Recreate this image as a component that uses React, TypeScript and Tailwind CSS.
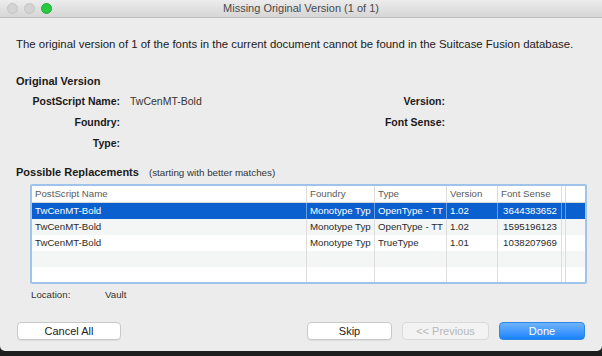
import React from "react";

const font = { fontFamily: "'Liberation Sans', Arial, sans-serif" };

type Row = { name: string; foundry: string; type: string; version: string; sense: string };

const rows: Row[] = [
  { name: "TwCenMT-Bold", foundry: "Monotype Typ", type: "OpenType - TT", version: "1.02", sense: "3644383652" },
  { name: "TwCenMT-Bold", foundry: "Monotype Typ", type: "OpenType - TT", version: "1.02", sense: "1595196123" },
  { name: "TwCenMT-Bold", foundry: "Monotype Typ", type: "TrueType", version: "1.01", sense: "1038207969" },
];

function Cells({ r, selected }: { r?: Row; selected?: boolean }) {
  const sep = selected ? "border-r border-[#6a9ee2]" : "border-r border-[#dcdcdc]";
  return (
    <>
      <div className={`w-[275px] pl-[3px] truncate ${sep}`}>{r?.name}</div>
      <div className={`w-[68px] pl-[3px] whitespace-nowrap overflow-hidden ${sep}`}>{r?.foundry}</div>
      <div className={`w-[72px] pl-[3px] whitespace-nowrap overflow-hidden ${sep}`}>{r?.type}</div>
      <div className={`w-[51px] pl-[3px] ${sep}`}>{r?.version}</div>
      <div className={`w-[64px] pr-[4px] text-right ${sep}`}>{r?.sense}</div>
      <div className={`w-[4px] ${sep}`}></div>
      <div className="flex-1"></div>
    </>
  );
}

export default function App() {
  return (
    <div className="w-[602px] h-[356px] bg-[#1e1e1e] overflow-hidden" style={font}>
      <div className="h-[351px] bg-[#ececec] rounded-b-[5px] flex flex-col text-[#1a1a1a]">
        {/* Title bar */}
        <div className="h-[18px] bg-gradient-to-b from-[#ececec] to-[#d6d6d6] border-b border-[#bdbdbd] grid grid-cols-[1fr_auto_1fr] items-center">
          <div className="flex items-center gap-[6px] pl-[7px]">
            <div className="w-[11px] h-[11px] rounded-full bg-[#d3d3d3] border border-[#c4c4c4]"></div>
            <div className="w-[11px] h-[11px] rounded-full bg-[#d3d3d3] border border-[#c4c4c4]"></div>
            <div className="w-[11px] h-[11px] rounded-full bg-[#27c93f] border border-[#1eae33]"></div>
          </div>
          <div className="text-[11px] text-[#4a4a4a] leading-[17px]">Missing Original Version (1 of 1)</div>
          <div></div>
        </div>

        <div className="px-[16px] flex flex-col">
          <p className="mt-[18px] text-[11.4px] leading-[16px] whitespace-nowrap">
            The original version of 1 of the fonts in the current document cannot be found in the Suitcase Fusion database.
          </p>

          <div className="mt-[21px] text-[11px] leading-[16px] font-bold">Original Version</div>

          <div className="mt-[2px] grid grid-cols-[104px_246px_59px_1fr] gap-x-[10px] text-[10.5px]">
            <div className="h-[21px] flex items-center justify-end font-bold whitespace-nowrap">PostScript Name:</div>
            <div className="h-[21px] flex items-center text-[#333]">TwCenMT-Bold</div>
            <div className="h-[21px] flex items-center justify-end font-bold whitespace-nowrap">Version:</div>
            <div className="h-[21px]"></div>
            <div className="h-[21px] flex items-center justify-end font-bold">Foundry:</div>
            <div className="h-[21px]"></div>
            <div className="h-[21px] flex items-center justify-end font-bold whitespace-nowrap">Font Sense:</div>
            <div className="h-[21px]"></div>
            <div className="h-[21px] flex items-center justify-end font-bold">Type:</div>
            <div className="h-[21px]"></div>
            <div className="h-[21px]"></div>
            <div className="h-[21px]"></div>
          </div>

          <div className="mt-[10px] flex items-baseline leading-[16px]">
            <span className="text-[11px] font-bold">Possible Replacements</span>
            <span className="ml-[10px] text-[9.8px] text-[#333]">(starting with better matches)</span>
          </div>

          {/* Table */}
          <div className="mt-[3px] ml-[14px] w-[557px] h-[100px] border-[2px] border-[#9fc3ea] rounded-[2px] bg-white flex flex-col text-[9.7px] text-[#2a2a2a] overflow-hidden">
            <div className="h-[17px] flex items-center border-b border-[#d6d6d6] text-[#5a5a5a] shrink-0">
              <div className="w-[275px] pl-[3px] h-full flex items-center border-r border-[#dcdcdc]">PostScript Name</div>
              <div className="w-[68px] pl-[3px] h-full flex items-center border-r border-[#dcdcdc]">Foundry</div>
              <div className="w-[72px] pl-[3px] h-full flex items-center border-r border-[#dcdcdc]">Type</div>
              <div className="w-[51px] pl-[3px] h-full flex items-center border-r border-[#dcdcdc]">Version</div>
              <div className="w-[64px] pl-[3px] h-full flex items-center border-r border-[#dcdcdc]">Font Sense</div>
              <div className="w-[4px] h-full border-r border-[#dcdcdc]"></div>
              <div className="flex-1"></div>
            </div>
            <div className="h-[16px] flex items-center bg-[#0b60d0] text-white shrink-0 [&>div]:h-full [&>div]:leading-[16px]">
              <Cells r={rows[0]} selected />
            </div>
            <div className="h-[16px] flex items-center bg-[#f4f5f5] shrink-0 [&>div]:h-full [&>div]:leading-[16px]">
              <Cells r={rows[1]} />
            </div>
            <div className="h-[16px] flex items-center bg-white shrink-0 [&>div]:h-full [&>div]:leading-[16px]">
              <Cells r={rows[2]} />
            </div>
            <div className="h-[16px] flex items-center bg-[#f4f5f5] shrink-0 [&>div]:h-full">
              <Cells />
            </div>
            <div className="flex-1 flex bg-white [&>div]:h-full">
              <Cells />
            </div>
          </div>

          <div className="mt-[5px] ml-[15px] flex text-[9.7px] leading-[12px] text-[#333]">
            <span className="w-[74px]">Location:</span>
            <span>Vault</span>
          </div>

          {/* Buttons */}
          <div className="mt-[21px] flex justify-between text-[11px]">
            <button className="ml-[1px] w-[104px] h-[18px] bg-white border border-[#c9c9c9] rounded-[4px] shadow-[0_1px_0_rgba(0,0,0,0.06)] text-[#222] leading-none">
              Cancel All
            </button>
            <div className="flex gap-[10px] mr-[1px]">
              <button className="w-[85px] h-[18px] bg-white border border-[#c9c9c9] rounded-[4px] shadow-[0_1px_0_rgba(0,0,0,0.06)] text-[#222] leading-none">
                Skip
              </button>
              <button className="w-[87px] h-[18px] bg-[#f3f3f3] border border-[#dadada] rounded-[4px] text-[#b8b8b8] leading-none">
                &lt;&lt; Previous
              </button>
              <button className="w-[86px] h-[18px] bg-gradient-to-b from-[#6cb3fa] to-[#1182fe] border border-[#2d86e8] rounded-[4px] text-white leading-none">
                Done
              </button>
            </div>
          </div>
        </div>
      </div>
    </div>
  );
}
